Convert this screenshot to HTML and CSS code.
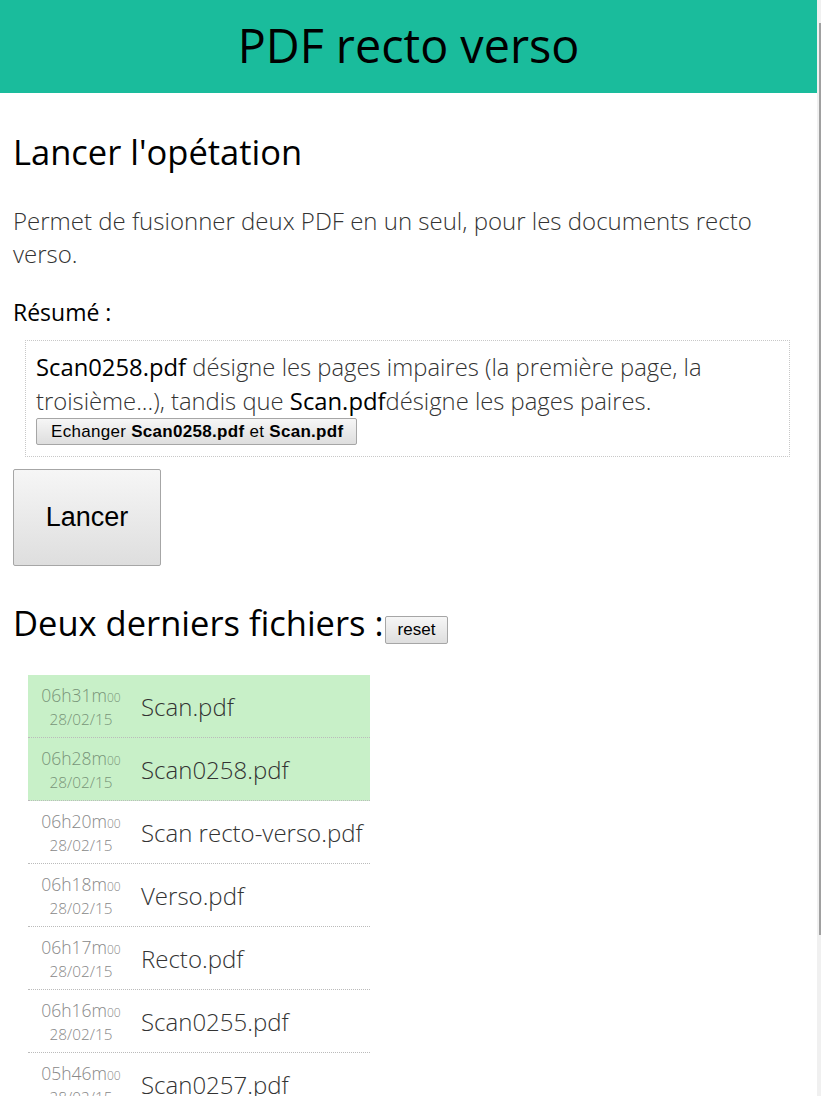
FILE: index.html
```html
<!DOCTYPE html>
<html lang="fr">
<head>
<meta charset="utf-8">
<title>PDF recto verso</title>
<link rel="stylesheet" href="styles.css">
</head>
<body>
<header class="topbar"><h1 class="title">PDF recto verso</h1></header>
<main class="content">
  <h2 class="section-title">Lancer l'opétation</h2>
  <p class="intro">Permet de fusionner deux PDF en un seul, pour les documents recto verso.</p>
  <div class="summary-label">Résumé :</div>
  <div class="summary-box">
    <div class="summary-text"><span class="fname">Scan0258.pdf</span> désigne les pages impaires (la première page, la troisième...), tandis que <span class="fname">Scan.pdf</span>désigne les pages paires.</div>
    <button class="btn btn-swap">Echanger <b>Scan0258.pdf</b> et <b>Scan.pdf</b></button>
  </div>
  <button class="btn btn-launch">Lancer</button>
  <h2 class="section-title files-title">Deux derniers fichiers :<button class="btn btn-reset">reset</button></h2>
  <ul class="files">
    <li class="file selected"><div class="stamp"><div class="time">06h31m<span class="sec">00</span></div><div class="date">28/02/15</div></div><div class="name">Scan.pdf</div></li>
    <li class="file selected"><div class="stamp"><div class="time">06h28m<span class="sec">00</span></div><div class="date">28/02/15</div></div><div class="name">Scan0258.pdf</div></li>
    <li class="file"><div class="stamp"><div class="time">06h20m<span class="sec">00</span></div><div class="date">28/02/15</div></div><div class="name">Scan recto-verso.pdf</div></li>
    <li class="file"><div class="stamp"><div class="time">06h18m<span class="sec">00</span></div><div class="date">28/02/15</div></div><div class="name">Verso.pdf</div></li>
    <li class="file"><div class="stamp"><div class="time">06h17m<span class="sec">00</span></div><div class="date">28/02/15</div></div><div class="name">Recto.pdf</div></li>
    <li class="file"><div class="stamp"><div class="time">06h16m<span class="sec">00</span></div><div class="date">28/02/15</div></div><div class="name">Scan0255.pdf</div></li>
    <li class="file"><div class="stamp"><div class="time">05h46m<span class="sec">00</span></div><div class="date">28/02/15</div></div><div class="name">Scan0257.pdf</div></li>
  </ul>
</main>
<div class="scrollbar"><div class="thumb"></div></div>
</body>
</html>
```

FILE: styles.css
```css
html, body {
  margin: 0;
  padding: 0;
  background: #fff;
  overflow: hidden;
}
body {
  font-family: "Open Sans", "DejaVu Sans", sans-serif;
  color: #000;
  width: 817px;
}
.topbar {
  background: #1abc9c;
  height: 93px;
  display: flex;
  align-items: center;
  justify-content: center;
}
.title {
  margin: 0;
  font-weight: 400;
  font-size: 46.7px;
  line-height: 1;
  padding-bottom: 3px;
}
.content {
  padding: 0 13px;
}
.section-title {
  margin: 35px 0 0 0;
  font-weight: 400;
  font-size: 34.5px;
  line-height: 48px;
}
.intro {
  margin: 28px 0 0 0;
  font-weight: 300;
  font-size: 24px;
  line-height: 33px;
  color: #333;
}
.summary-label {
  margin-top: 27px;
  font-size: 23px;
  font-weight: 400;
  line-height: 30px;
}
.summary-box {
  margin: 13px 14px 0 12px;
  border: 1px dotted #c8c8c8;
  padding: 9px 10px 11px 10px;
}
.summary-text {
  font-weight: 300;
  font-size: 23.8px;
  line-height: 34px;
  color: #333;
}
.fname {
  font-weight: 400;
  color: #000;
}
.btn {
  font-family: "Liberation Sans", Arial, sans-serif;
  color: #000;
  background: linear-gradient(#f6f6f6, #dedede);
  border: 1px solid #a6a6a6;
  border-radius: 2px;
  padding: 0 6px;
  cursor: pointer;
}
.btn-swap {
  display: block;
  font-size: 17px;
  letter-spacing: 0.3px;
  height: 27px;
  padding: 0 13px 0 14px;
}
.btn-launch {
  display: block;
  margin-top: 12px;
  width: 148px;
  height: 97px;
  font-size: 27px;
}
.files-title {
  margin-top: 33px;
  display: flex;
  align-items: center;
}
.btn-reset {
  font-size: 17px;
  height: 28px;
  padding: 0 12px;
  margin-top: 14px;
  margin-left: 1px;
}
.files {
  list-style: none;
  margin: 28px 0 0 15px;
  padding: 0;
  width: 342px;
}
.file {
  display: flex;
  align-items: center;
  height: 62px;
  border-bottom: 1px dotted #bbb;
}
.file.selected {
  background: #c8f0c8;
}
.stamp {
  width: 106px;
  text-align: center;
  font-weight: 300;
  color: #888;
}
.selected .stamp { color: #789478; }
.time {
  font-size: 17.5px;
  line-height: 22px;
}
.sec {
  font-size: 12px;
}
.date {
  font-size: 15.3px;
  line-height: 20px;
}
.name {
  padding-left: 7px;
  font-weight: 300;
  font-size: 24px;
  color: #333;
  white-space: nowrap;
}
.scrollbar {
  position: fixed;
  top: 0;
  right: 0;
  width: 4px;
  height: 100%;
  background: #f0f0f0;
}
.thumb {
  position: absolute;
  right: 0;
  top: 23px;
  width: 2px;
  height: 912px;
  background: #a0a0a0;
}
```
